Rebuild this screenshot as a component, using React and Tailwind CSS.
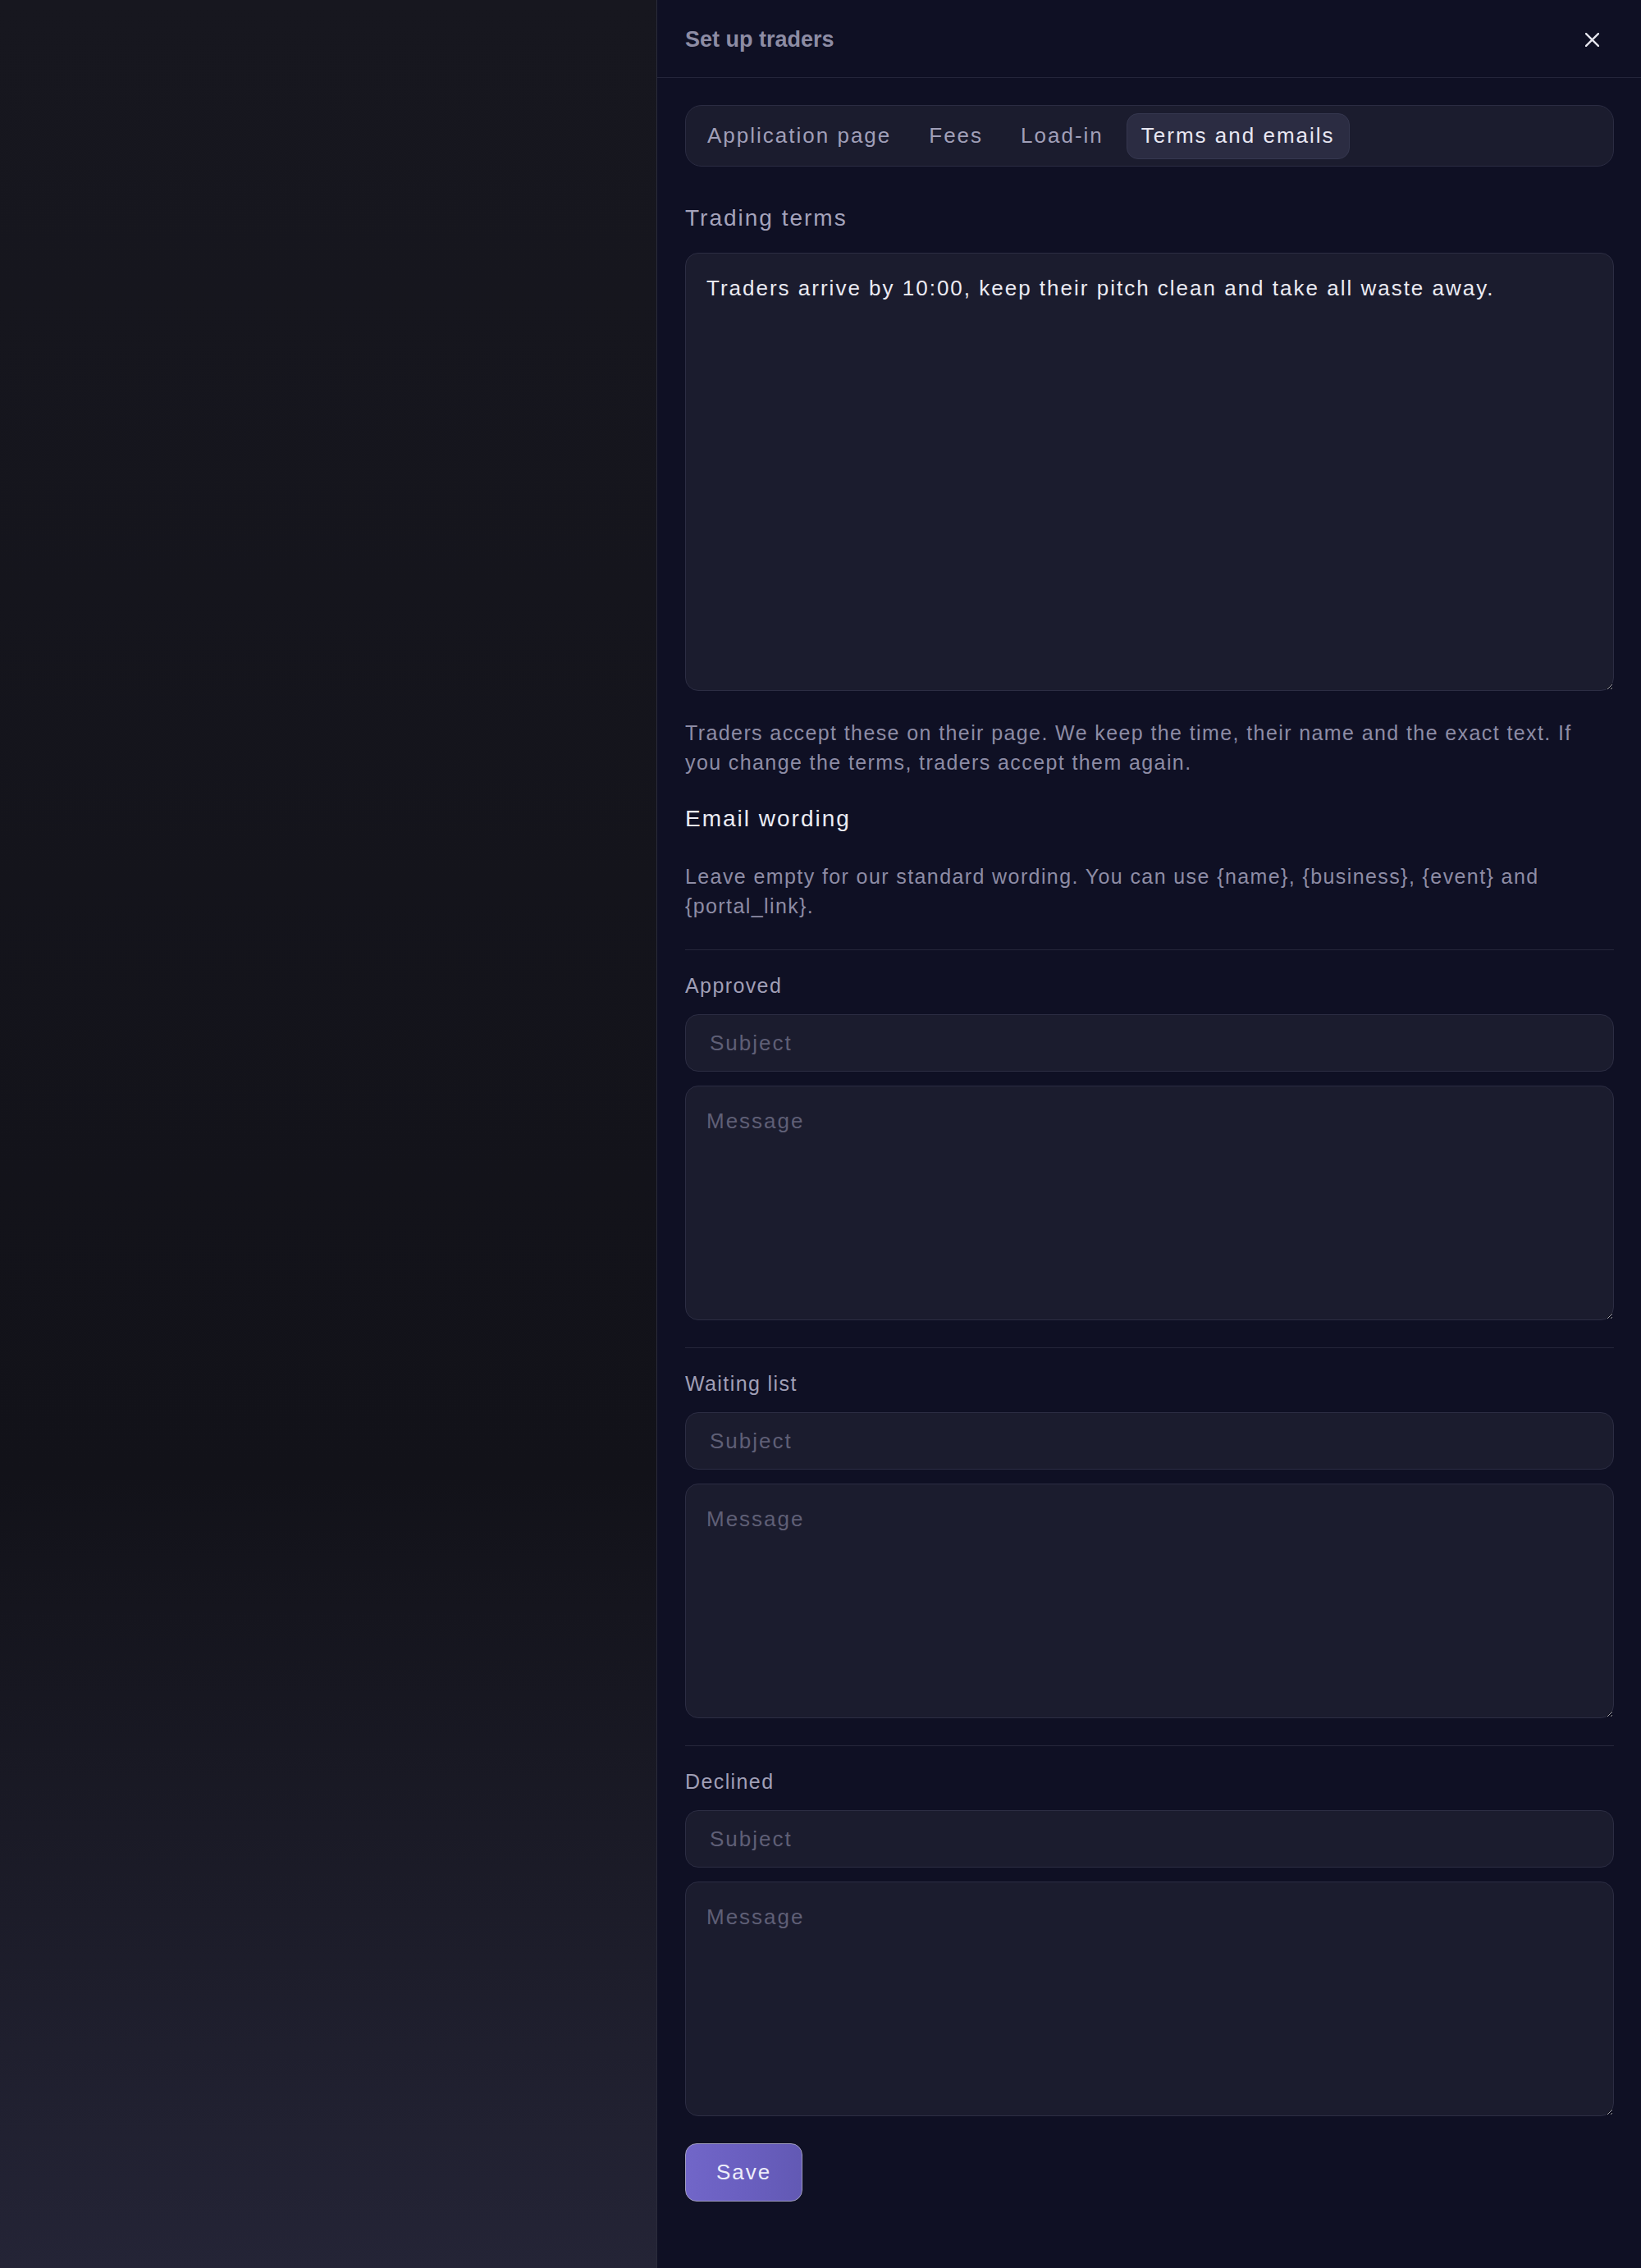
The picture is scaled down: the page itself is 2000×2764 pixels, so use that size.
import React from "react";

const fieldBase =
  "block w-full rounded-[16px] border border-[#2c2d43] bg-[#1b1c2e] text-[26px] tracking-[2px] text-[#ebebf3] placeholder:text-[#5f5f76] outline-none [color-scheme:dark]";

function Section({ label, first }) {
  return (
    <div className={`${first ? "mt-[35px]" : "mt-[33px]"} border-t border-[#25263a] pt-[25px]`}>
      <div className="text-[25px] leading-[36px] tracking-[1.4px] text-[#a09fb6]">{label}</div>
      <input className={`${fieldBase} mt-[17px] h-[70px] px-[29px]`} placeholder="Subject" />
      <textarea
        className={`${fieldBase} mt-[17px] h-[286px] px-[25px] py-[24px] leading-[36px]`}
        placeholder="Message"
      />
    </div>
  );
}

export default function App() {
  const tabs = ["Application page", "Fees", "Load-in", "Terms and emails"];
  return (
    <div className="flex min-h-[2764px] w-full font-['Liberation_Sans',Arial,sans-serif]">
      <div className="w-[800px] shrink-0 bg-[linear-gradient(to_bottom,#17171f_0%,#121219_65%,#242436_100%)]" />
      <div className="flex w-[1200px] shrink-0 flex-col border-l border-[#2a2b3b] bg-[#0f1024]">
        <div className="flex h-[95px] items-center justify-between border-b border-[#24253a] pl-[34px] pr-[40px] pt-[2px]">
          <div className="text-[27px] font-bold text-[#8d8ca4]">Set up traders</div>
          <button className="flex h-[40px] w-[40px] items-center justify-center">
            <svg width="17" height="17" viewBox="0 0 16 16" fill="none">
              <path d="M1 1L15 15M15 1L1 15" stroke="#e6e6ee" strokeWidth="2.2" strokeLinecap="round" />
            </svg>
          </button>
        </div>

        <div className="flex flex-col pl-[34px] pr-[33px] pt-[33px]">
          <div className="flex h-[75px] items-center gap-[10px] rounded-[20px] border-[1.5px] border-[#2b2c42] bg-[#1b1c2e] px-[8px]">
            {tabs.map((t, i) =>
              i === 3 ? (
                <div
                  key={t}
                  className="flex h-[56px] items-center rounded-[14px] border border-[#35374f] bg-[#2b2c42] px-[17px] text-[26px] tracking-[2px] text-[#e8e7f2]"
                >
                  {t}
                </div>
              ) : (
                <div
                  key={t}
                  className="flex h-[56px] items-center px-[18px] text-[26px] tracking-[2px] text-[#a09fb8]"
                >
                  {t}
                </div>
              )
            )}
          </div>

          <div className="mt-[45px] text-[28px] leading-[36px] tracking-[2px] text-[#a4a3bb]">Trading terms</div>
          <textarea
            className={`${fieldBase} mt-[24px] h-[534px] px-[25px] py-[24px] leading-[36px]`}
            defaultValue="Traders arrive by 10:00, keep their pitch clean and take all waste away."
          />

          <p className="mt-[33px] text-[25px] leading-[36px] tracking-[1.4px] text-[#8d8ca5]">
            Traders accept these on their page. We keep the time, their name and the exact text. If you change the terms, traders accept them again.
          </p>

          <div className="mt-[33px] text-[28px] leading-[36px] tracking-[2px] text-[#ececf4]">Email wording</div>

          <p className="mt-[34px] text-[25px] leading-[36px] tracking-[1.4px] text-[#8d8ca5]">
            Leave empty for our standard wording. You can use {"{name}"}, {"{business}"}, {"{event}"} and {"{portal_link}"}.
          </p>

          <Section label="Approved" first />
          <Section label="Waiting list" />
          <Section label="Declined" />

          <button className="mt-[33px] flex h-[71px] items-center self-start rounded-[14px] border-[1.5px] border-[#a09dbf] bg-[linear-gradient(90deg,#7166c8,#6a5fc0_50%,#6259b4)] px-[37px] text-[26px] tracking-[2px] text-[#eeeefa]">
            Save
          </button>
        </div>
      </div>
    </div>
  );
}
